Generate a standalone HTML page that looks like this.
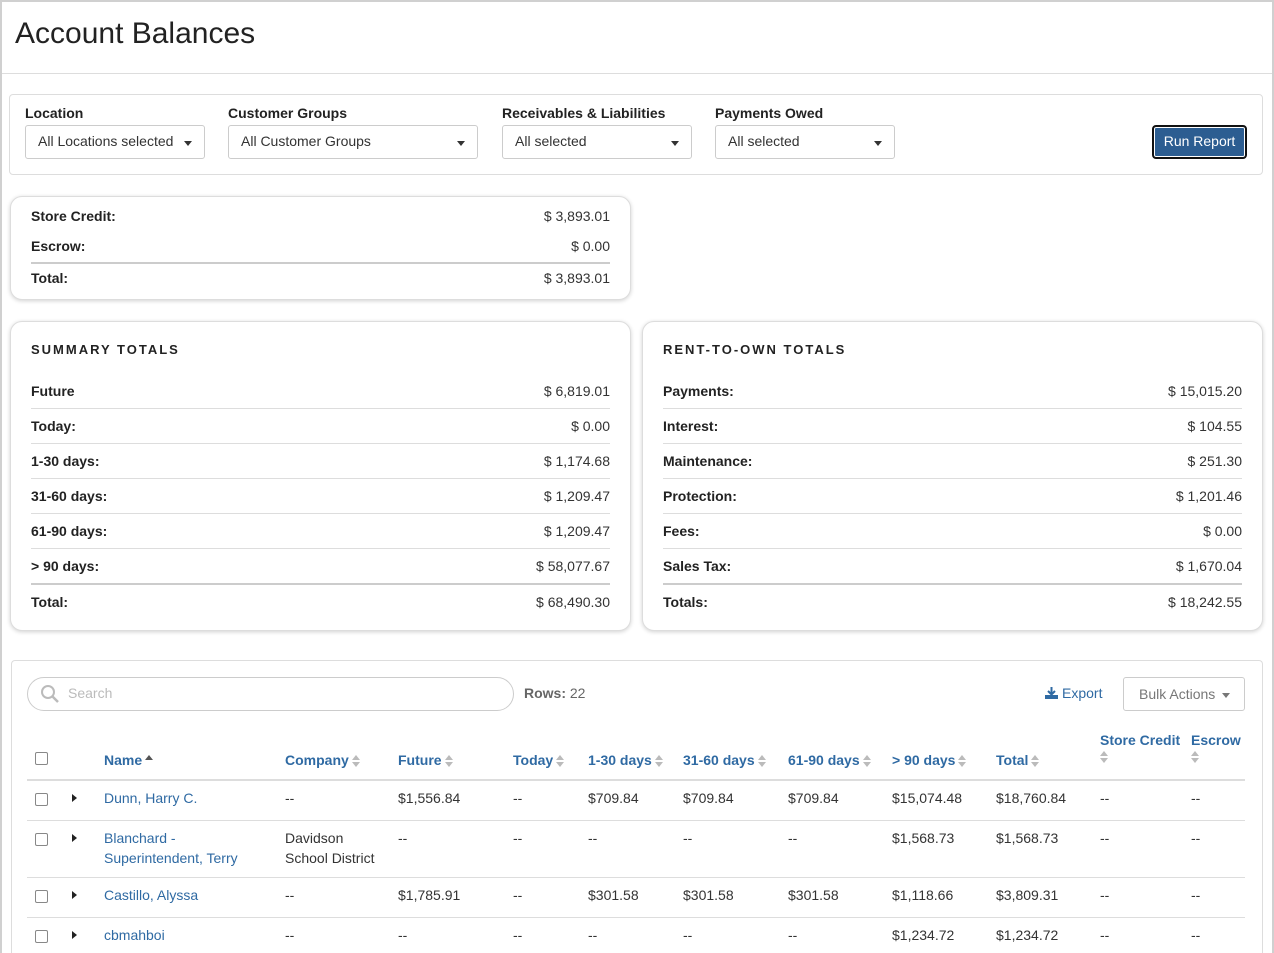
<!DOCTYPE html>
<html style="overflow:hidden;height:953px"><head><meta charset="utf-8"><style>
*{box-sizing:border-box;margin:0;padding:0}
body{width:1274px;height:953px;overflow:hidden;background:#fff;font-family:"Liberation Sans",sans-serif;font-size:14px;color:#333;position:relative}
.frame{position:absolute;left:0;top:0;width:1274px;height:953px;border:2px solid #d0d0d0;border-bottom:none;z-index:5;pointer-events:none}
.abs{position:absolute}
h1{position:absolute;left:15px;top:17px;font-size:30px;font-weight:normal;color:#222}
.hline{position:absolute;left:2px;right:2px;top:73px;border-top:1px solid #ddd}
.panel{position:absolute;border:1px solid #ddd;border-radius:4px;background:#fff}
.lbl{position:absolute;font-size:14px;font-weight:bold;color:#222;top:105px}
.sel{position:absolute;top:125px;height:34px;border:1px solid #ccc;border-radius:3px;padding:7px 12px;color:#333;font-size:14px}
.caret{position:absolute;right:12px;top:15px;border-left:4px solid transparent;border-right:4px solid transparent;border-top:5px solid #333}
.btn{position:absolute;left:1152px;top:125px;width:95px;height:34px;background:#2c5d91;border:2px solid #111;border-radius:4px;color:#fff;text-align:center;line-height:29px;font-size:14px;box-shadow:inset 0 0 0 1px #fff}
.card{position:absolute;border:1px solid #ddd;border-radius:12px;box-shadow:0 1px 4px rgba(0,0,0,.18);background:#fff}
.row{position:absolute;left:20px;right:20px;height:35px;border-bottom:1px solid #ddd;font-size:14px}
.row b{position:absolute;left:0;top:9px;color:#222}
.row span{position:absolute;right:0;top:9px;color:#333}
.row.last{border-bottom:none}
.row.thick{border-bottom:2px solid #ccc}
.ct{position:absolute;left:20px;top:20px;font-size:13px;font-weight:bold;letter-spacing:2px;color:#222}
.th{position:absolute;top:752px;color:#2f6aa3;font-weight:bold;font-size:14px}
.s{display:inline-block;width:8px;height:12px;vertical-align:-2px;margin-left:3px;position:relative}
.s:before{content:"";position:absolute;left:0;top:0;border-left:4px solid transparent;border-right:4px solid transparent;border-bottom:5px solid #bbb}
.s:after{content:"";position:absolute;left:0;top:7px;border-left:4px solid transparent;border-right:4px solid transparent;border-top:5px solid #bbb}
.up:after{display:none}.up:before{border-bottom-color:#555}
.cb{position:absolute;left:35px;width:13px;height:13px;border:1px solid #888;border-radius:2px;background:#fff}
.tri{position:absolute;left:72px;border-top:4px solid transparent;border-bottom:4px solid transparent;border-left:5px solid #222}
.td{position:absolute;font-size:14px;color:#333}
.lk{color:#2f6aa3}
.rl{position:absolute;left:27px;width:1218px;border-top:1px solid #ddd}
</style></head><body>
<div class="frame"></div>
<h1>Account Balances</h1>
<div class="hline"></div>

<div class="panel" style="left:9px;top:94px;width:1254px;height:81px"></div>
<div class="lbl" style="left:25px">Location</div>
<div class="sel" style="left:25px;width:180px">All Locations selected<i class="caret"></i></div>
<div class="lbl" style="left:228px">Customer Groups</div>
<div class="sel" style="left:228px;width:250px">All Customer Groups<i class="caret"></i></div>
<div class="lbl" style="left:502px">Receivables &amp; Liabilities</div>
<div class="sel" style="left:502px;width:190px">All selected<i class="caret"></i></div>
<div class="lbl" style="left:715px">Payments Owed</div>
<div class="sel" style="left:715px;width:180px">All selected<i class="caret"></i></div>
<div class="btn">Run Report</div>

<div class="card" style="left:10px;top:196px;width:621px;height:104px">
<div class="row last" style="top:2px;height:30px"><b>Store Credit:</b><span>$ 3,893.01</span></div>
<div class="row thick" style="top:32px;height:35px"><b>Escrow:</b><span>$ 0.00</span></div>
<div class="row last" style="top:64px;height:30px"><b>Total:</b><span>$ 3,893.01</span></div>
</div>

<div class="card" style="left:10px;top:321px;width:621px;height:310px">
<div class="ct">SUMMARY TOTALS</div>
<div class="row" style="top:52px"><b>Future</b><span>$ 6,819.01</span></div>
<div class="row" style="top:87px"><b>Today:</b><span>$ 0.00</span></div>
<div class="row" style="top:122px"><b>1-30 days:</b><span>$ 1,174.68</span></div>
<div class="row" style="top:157px"><b>31-60 days:</b><span>$ 1,209.47</span></div>
<div class="row" style="top:192px"><b>61-90 days:</b><span>$ 1,209.47</span></div>
<div class="row thick" style="top:227px;height:36px"><b>&gt; 90 days:</b><span>$ 58,077.67</span></div>
<div class="row last" style="top:263px"><b>Total:</b><span>$ 68,490.30</span></div>
</div>

<div class="card" style="left:642px;top:321px;width:621px;height:310px">
<div class="ct">RENT-TO-OWN TOTALS</div>
<div class="row" style="top:52px"><b>Payments:</b><span>$ 15,015.20</span></div>
<div class="row" style="top:87px"><b>Interest:</b><span>$ 104.55</span></div>
<div class="row" style="top:122px"><b>Maintenance:</b><span>$ 251.30</span></div>
<div class="row" style="top:157px"><b>Protection:</b><span>$ 1,201.46</span></div>
<div class="row" style="top:192px"><b>Fees:</b><span>$ 0.00</span></div>
<div class="row thick" style="top:227px;height:36px"><b>Sales Tax:</b><span>$ 1,670.04</span></div>
<div class="row last" style="top:263px"><b>Totals:</b><span>$ 18,242.55</span></div>
</div>

<div class="panel" style="left:11px;top:660px;width:1252px;height:293px;border-bottom:none;border-radius:4px 4px 0 0"></div>
<div class="abs" style="left:27px;top:677px;width:487px;height:34px;border:1px solid #ccc;border-radius:17px"></div>
<svg class="abs" style="left:40px;top:684px" width="20" height="20" viewBox="0 0 20 20"><circle cx="8" cy="8" r="6" fill="none" stroke="#bbb" stroke-width="2"/><path d="M12.5 12.5L18 18" stroke="#bbb" stroke-width="2.5"/></svg>
<div class="td" style="left:68px;top:685px;color:#bbb">Search</div>
<div class="td" style="left:524px;top:685px;color:#666"><b>Rows:</b> 22</div>
<svg class="abs" style="left:1044px;top:686px" width="15" height="14" viewBox="0 0 15 14"><path d="M7.5 1v7M4 5l3.5 3.5L11 5" stroke="#2f6aa3" stroke-width="2" fill="none"/><path d="M1 9v4h13V9" fill="#2f6aa3"/></svg>
<div class="td lk" style="left:1062px;top:685px">Export</div>
<div class="abs" style="left:1123px;top:677px;width:122px;height:34px;border:1px solid #ccc;border-radius:3px;color:#777;padding:8px 15px">Bulk Actions<i class="caret" style="border-top-color:#777;right:14px"></i></div>

<div class="cb" style="top:752px"></div>
<div class="th" style="left:104px">Name<i class="s up"></i></div>
<div class="th" style="left:285px">Company<i class="s"></i></div>
<div class="th" style="left:398px">Future<i class="s"></i></div>
<div class="th" style="left:513px">Today<i class="s"></i></div>
<div class="th" style="left:588px">1-30 days<i class="s"></i></div>
<div class="th" style="left:683px">31-60 days<i class="s"></i></div>
<div class="th" style="left:788px">61-90 days<i class="s"></i></div>
<div class="th" style="left:892px">&gt; 90 days<i class="s"></i></div>
<div class="th" style="left:996px">Total<i class="s"></i></div>
<div class="th" style="left:1100px;top:732px">Store Credit<br><i class="s" style="margin-left:0"></i></div>
<div class="th" style="left:1191px;top:732px">Escrow<br><i class="s" style="margin-left:0"></i></div>
<div class="rl" style="top:779px;border-top:2px solid #ddd"></div>

<div class="cb" style="top:793px"></div><div class="tri" style="top:794px"></div>
<div class="td lk" style="left:104px;top:790px">Dunn, Harry C.</div>
<div class="td" style="left:285px;top:790px">--</div><div class="td" style="left:398px;top:790px">$1,556.84</div><div class="td" style="left:513px;top:790px">--</div><div class="td" style="left:588px;top:790px">$709.84</div><div class="td" style="left:683px;top:790px">$709.84</div><div class="td" style="left:788px;top:790px">$709.84</div><div class="td" style="left:892px;top:790px">$15,074.48</div><div class="td" style="left:996px;top:790px">$18,760.84</div><div class="td" style="left:1100px;top:790px">--</div><div class="td" style="left:1191px;top:790px">--</div>
<div class="rl" style="top:820px"></div>

<div class="cb" style="top:833px"></div><div class="tri" style="top:834px"></div>
<div class="td lk" style="left:104px;top:828px;line-height:20px">Blanchard -<br>Superintendent, Terry</div>
<div class="td" style="left:285px;top:828px;line-height:20px">Davidson<br>School District</div>
<div class="td" style="left:398px;top:830px">--</div><div class="td" style="left:513px;top:830px">--</div><div class="td" style="left:588px;top:830px">--</div><div class="td" style="left:683px;top:830px">--</div><div class="td" style="left:788px;top:830px">--</div><div class="td" style="left:892px;top:830px">$1,568.73</div><div class="td" style="left:996px;top:830px">$1,568.73</div><div class="td" style="left:1100px;top:830px">--</div><div class="td" style="left:1191px;top:830px">--</div>
<div class="rl" style="top:877px"></div>

<div class="cb" style="top:890px"></div><div class="tri" style="top:891px"></div>
<div class="td lk" style="left:104px;top:887px">Castillo, Alyssa</div>
<div class="td" style="left:285px;top:887px">--</div><div class="td" style="left:398px;top:887px">$1,785.91</div><div class="td" style="left:513px;top:887px">--</div><div class="td" style="left:588px;top:887px">$301.58</div><div class="td" style="left:683px;top:887px">$301.58</div><div class="td" style="left:788px;top:887px">$301.58</div><div class="td" style="left:892px;top:887px">$1,118.66</div><div class="td" style="left:996px;top:887px">$3,809.31</div><div class="td" style="left:1100px;top:887px">--</div><div class="td" style="left:1191px;top:887px">--</div>
<div class="rl" style="top:917px"></div>

<div class="cb" style="top:930px"></div><div class="tri" style="top:931px"></div>
<div class="td lk" style="left:104px;top:927px">cbmahboi</div>
<div class="td" style="left:285px;top:927px">--</div><div class="td" style="left:398px;top:927px">--</div><div class="td" style="left:513px;top:927px">--</div><div class="td" style="left:588px;top:927px">--</div><div class="td" style="left:683px;top:927px">--</div><div class="td" style="left:788px;top:927px">--</div><div class="td" style="left:892px;top:927px">$1,234.72</div><div class="td" style="left:996px;top:927px">$1,234.72</div><div class="td" style="left:1100px;top:927px">--</div><div class="td" style="left:1191px;top:927px">--</div>
</body></html>
